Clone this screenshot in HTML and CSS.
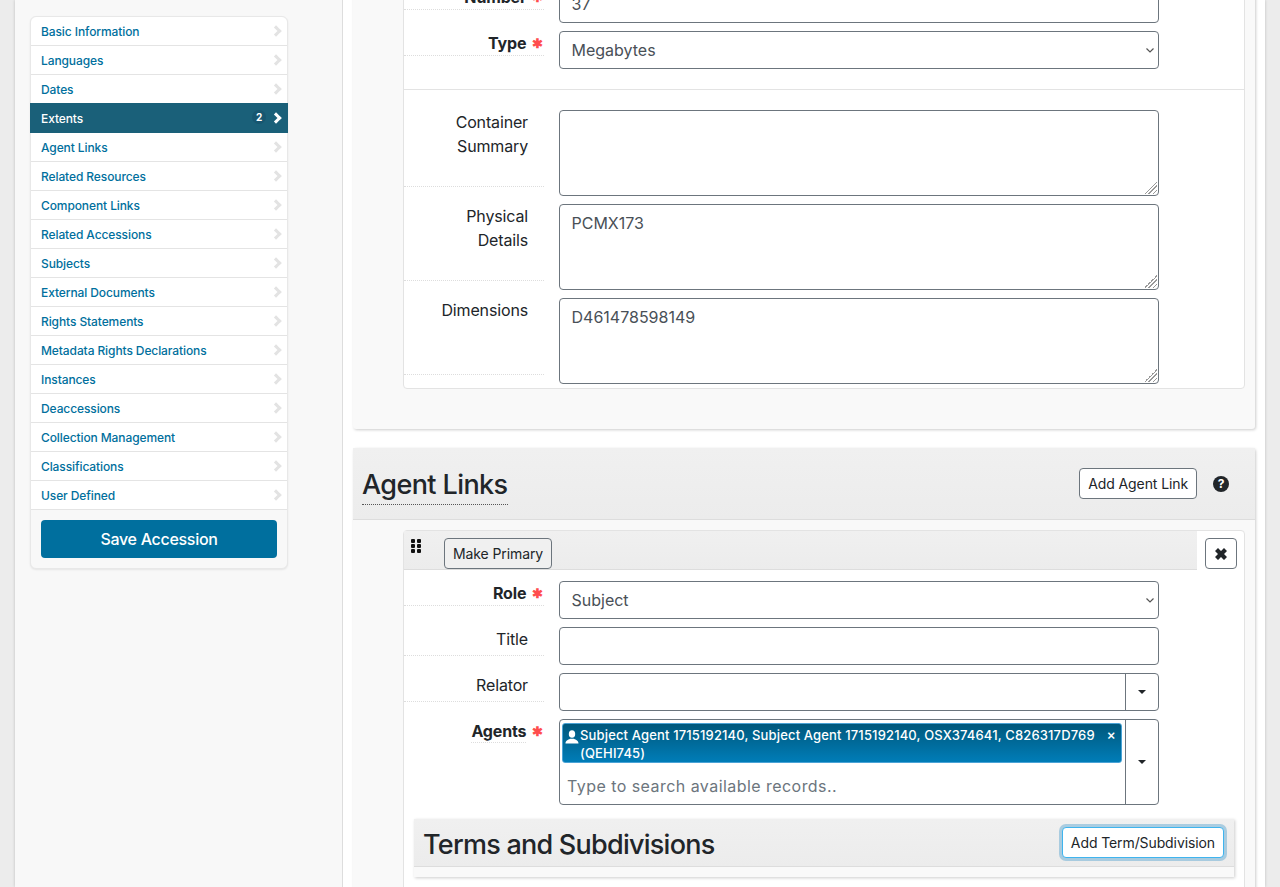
FILE: index.html
```html
<!DOCTYPE html>
<html lang="en">
<head>
    <meta charset="UTF-8">
    <title>Edit Accession</title>
    <link rel="stylesheet" href="styles.css">
</head>
<body>
<div class="page">
    <aside class="side">
        <div class="nav-card">
            <ul class="nav">
                <li><a href="#">Basic Information</a></li>
                <li><a href="#">Languages</a></li>
                <li><a href="#">Dates</a></li>
                <li class="active"><a href="#">Extents <span class="count">2</span></a></li>
                <li><a href="#">Agent Links</a></li>
                <li><a href="#">Related Resources</a></li>
                <li><a href="#">Component Links</a></li>
                <li><a href="#">Related Accessions</a></li>
                <li><a href="#">Subjects</a></li>
                <li><a href="#">External Documents</a></li>
                <li><a href="#">Rights Statements</a></li>
                <li><a href="#">Metadata Rights Declarations</a></li>
                <li><a href="#">Instances</a></li>
                <li><a href="#">Deaccessions</a></li>
                <li><a href="#">Collection Management</a></li>
                <li><a href="#">Classifications</a></li>
                <li><a href="#">User Defined</a></li>
            </ul>
            <div class="save-wrap">
                <button class="btn-save">Save Accession</button>
            </div>
        </div>
    </aside>

    <main class="main">
        <section class="section section-extents">
            <div class="subrecord">
                <div class="fields">
                    <div class="row">
                        <label class="label required">Number <span class="star">✱</span></label>
                        <input class="control" type="text" value="37">
                    </div>
                    <div class="row">
                        <label class="label required">Type <span class="star">✱</span></label>
                        <select class="control"><option>Megabytes</option></select>
                    </div>
                </div>
                <hr class="divider">
                <div class="fields fields-notes">
                    <div class="row">
                        <label class="label">Container Summary</label>
                        <textarea class="control area"></textarea>
                    </div>
                    <div class="row">
                        <label class="label">Physical Details</label>
                        <textarea class="control area">PCMX173</textarea>
                    </div>
                    <div class="row">
                        <label class="label">Dimensions</label>
                        <textarea class="control area">D461478598149</textarea>
                    </div>
                </div>
            </div>
        </section>

        <section class="section section-agents">
            <header class="section-head">
                <h2 class="section-title"><span>Agent Links</span></h2>
                <button class="btn">Add Agent Link</button>
                <span class="help">?</span>
            </header>
            <div class="section-body">
                <div class="subrecord">
                    <div class="sub-top">
                        <div class="sub-bar">
                            <span class="drag"><i></i><i></i><i></i><i></i><i></i><i></i></span>
                            <button class="btn btn-grey">Make Primary</button>
                        </div>
                        <button class="btn btn-close">
                            <svg width="14" height="14" viewBox="0 0 14 14"><path d="M1 4l3-3 3 3 3-3 3 3-3 3 3 3-3 3-3-3-3 3-3-3 3-3z" fill="#212529"/></svg>
                        </button>
                    </div>
                    <div class="fields fields-agent">
                        <div class="row">
                            <label class="label required">Role <span class="star">✱</span></label>
                            <select class="control"><option>Subject</option></select>
                        </div>
                        <div class="row">
                            <label class="label">Title</label>
                            <input class="control" type="text">
                        </div>
                        <div class="row">
                            <label class="label">Relator</label>
                            <div class="combo">
                                <input class="combo-input" type="text">
                                <span class="combo-btn"><b class="caret"></b></span>
                            </div>
                        </div>
                        <div class="row">
                            <label class="label required label-short"><span class="label-text">Agents</span> <span class="star">✱</span></label>
                            <div class="combo combo-tall">
                                <div class="combo-main">
                                    <div class="chip">
                                        <svg class="chip-icon" width="14" height="14" viewBox="0 0 14 14"><ellipse cx="7" cy="4" rx="3.200" ry="3.800" fill="#fff"/><path d="M0.500 13.500c0-2.800 2.400-3.600 4.600-4.800h3.800c2.200 1.200 4.600 2 4.600 4.800z" fill="#fff"/></svg>
                                        <span class="chip-text">Subject Agent 1715192140, Subject Agent 1715192140, OSX374641, C826317D769 (QEHI745)</span>
                                        <span class="chip-x">×</span>
                                    </div>
                                    <input class="chip-search" type="text" placeholder="Type to search available records..">
                                </div>
                                <span class="combo-btn"><b class="caret"></b></span>
                            </div>
                        </div>
                    </div>
                    <div class="terms">
                        <header class="terms-head">
                            <h3 class="terms-title">Terms and Subdivisions</h3>
                            <button class="btn btn-focus">Add Term/Subdivision</button>
                        </header>
                        <div class="terms-body"></div>
                    </div>
                </div>
            </div>
        </section>
    </main>
</div>
</body>
</html>
```
FILE: styles.css
```css
* {
    box-sizing: border-box;
}
html, body {
    margin: 0;
    height: 887px;
    overflow: hidden;
}
body {
    background-color: #ececec;
    font-family: Inter, "Liberation Sans", sans-serif;
    color: #212529;
}
.page {
    display: flex;
    height: 887px;
    margin: 0 15px;
    background-color: #fff;
    box-shadow: 0 0 3px rgba(0, 0, 0, 0.2);
    overflow: hidden;
}

/* sidebar */
.side {
    width: 328px;
    flex: none;
    padding: 16px 54px 0 15px;
    background-color: #f8f8f8;
    border-right: 1px solid #ddd;
}
.nav-card {
    background-color: #f8f8f8;
    border: 1px solid #e8e8e8;
    border-radius: 6px;
    box-shadow: 0 1px 2px rgba(0, 0, 0, 0.08);
}
.nav {
    list-style: none;
    margin: 0;
    padding: 0;
}
.nav li {
    height: 29px;
    background-color: #fff;
    border-bottom: 1px solid #e4e4e4;
}
.nav li:first-child {
    border-radius: 6px 6px 0 0;
}
.nav a {
    display: flex;
    align-items: center;
    height: 28px;
    padding: 0 7px 0 10px;
    font-size: 12px;
    font-weight: 500;
    letter-spacing: -0.1px;
    color: #006f9d;
    text-decoration: none;
}
.nav a::after {
    content: "";
    width: 5px;
    height: 5px;
    margin-left: auto;
    border-top: 3.5px solid #e3e3e3;
    border-right: 3.5px solid #e3e3e3;
    transform: rotate(45deg);
}
.nav .active {
    height: 30px;
    margin: -1px -1px 0;
    padding-top: 1px;
    background-color: #1a6079;
    border-bottom-color: #1a6079;
}
.nav .active a {
    padding-left: 11px;
    padding-right: 8px;
    color: #fff;
}
.nav .active a::after {
    margin-left: 6px;
    border-color: #fff;
}
.count {
    display: flex;
    align-items: center;
    justify-content: center;
    width: 14px;
    height: 14px;
    margin-left: auto;
    margin-bottom: 2px;
    border-radius: 50%;
    background-color: #175670;
    font-size: 10px;
    font-weight: 700;
}
.save-wrap {
    padding: 10px;
}
.btn-save {
    display: block;
    width: 100%;
    height: 38px;
    border: none;
    border-radius: 4px;
    background-color: #006f9e;
    color: #fff;
    font-family: inherit;
    font-size: 16px;
    font-weight: 500;
    letter-spacing: -0.3px;
}

/* main column */
.main {
    flex: 1;
    min-width: 0;
    padding: 0 10px;
    margin-top: -24px;
}
.section {
    background-color: #f9f9f9;
    box-shadow: 1px 1px 3px rgba(0, 0, 0, 0.2);
    border-radius: 3px;
}
.section-extents {
    padding: 0 10px 40px 50px;
    margin-bottom: 19px;
}
.section-agents {
    height: 600px;
}
.section-head {
    display: flex;
    align-items: center;
    height: 72px;
    padding: 0 26px 0 9px;
    background: linear-gradient(#f0f0f0, #ececec);
    border-bottom: 1px solid #ddd;
}
.section-title {
    margin: 4px auto 0 0;
    font-size: 27px;
    font-weight: 500;
    letter-spacing: -0.6px;
    line-height: 36px;
}
.section-title span {
    display: inline-block;
    padding-bottom: 1px;
    border-bottom: 1px dotted #555;
}
.section-body {
    padding: 10px 10px 0 50px;
}
.subrecord {
    background-color: #fff;
    border: 1px solid #e3e3e3;
    border-radius: 4px;
    padding-bottom: 4px;
}
.section-body .subrecord {
    height: 500px;
}
.fields {
    display: flex;
    flex-direction: column;
    gap: 8px;
    padding-top: 8px;
}
.row {
    display: flex;
}
.label {
    flex: none;
    display: block;
    width: 140px;
    margin: 0 15px 9px 0;
    padding: 0 16px 0 20px;
    border-bottom: 1px dotted #ddd;
    font-size: 16px;
    letter-spacing: -0.15px;
    line-height: 24px;
    text-align: right;
}
.required {
    margin-bottom: 13px;
    padding-right: 0;
    padding-left: 0;
    font-weight: 700;
}
.label-short {
    border-bottom: none;
}
.label-text {
    display: inline-block;
    line-height: 22px;
    border-bottom: 1px dotted #ddd;
}
.star {
    display: inline-block;
    width: 13px;
    margin-left: 1px;
    font-size: 13px;
    line-height: 24px;
    color: #ff4d4d;
    text-align: center;
    vertical-align: top;
}
.control {
    display: block;
    width: 600px;
    height: 38px;
    padding: 6px 11.5px;
    border: 1px solid #6c757d;
    border-radius: 4px;
    background-color: #fff;
    color: #495057;
    font-family: inherit;
    font-size: 16px;
    line-height: 24px;
}
select.control {
    appearance: none;
    background-image: url("data:image/svg+xml,%3Csvg xmlns='http://www.w3.org/2000/svg' width='8' height='5'%3E%3Cpath d='M0.500 0.500L4 4L7.500 0.500' fill='none' stroke='%23555' stroke-width='1.200'/%3E%3C/svg%3E");
    background-repeat: no-repeat;
    background-position: right 4px center;
}
.area {
    height: 86px;
    resize: none;
    background-image:
        linear-gradient(135deg, #fff 50%, transparent 50%),
        repeating-linear-gradient(135deg, #999 0, #999 1px, #fff 1px, #fff 3px);
    background-size: 13px 13px;
    background-position: right 1px bottom 1px;
    background-repeat: no-repeat;
}
.divider {
    margin: 20px 0;
    border: none;
    border-top: 1px solid #e3e3e3;
}
.fields-notes {
    padding-top: 0;
}

/* buttons */
.btn {
    height: 31px;
    padding: 0 8px;
    border: 1px solid #6c757d;
    border-radius: 4px;
    background-color: #fff;
    color: #212529;
    font-family: inherit;
    font-size: 14px;
    letter-spacing: -0.1px;
}
.help {
    display: flex;
    align-items: center;
    justify-content: center;
    width: 16px;
    height: 16px;
    margin-left: 16px;
    border-radius: 50%;
    background-color: #212529;
    color: #fff;
    font-size: 12px;
    font-weight: 700;
}
.sub-top {
    display: flex;
    height: 39px;
}
.sub-bar {
    display: flex;
    width: 793px;
    height: 39px;
    padding: 7px 0 0 7px;
    background: linear-gradient(#f0f0f0, #ececec);
    border-bottom: 1px solid #ddd;
}
.drag {
    display: grid;
    grid-template-columns: 4px 4px;
    grid-auto-rows: 4px;
    gap: 1px 2px;
    width: 33px;
    margin-top: 1px;
}
.drag i {
    background-color: #111;
    border-radius: 1px;
}
.btn-grey {
    background-color: #f0f0f0;
}
.btn-close {
    display: flex;
    align-items: center;
    justify-content: center;
    width: 32px;
    margin: 7px 0 0 8px;
    padding: 0;
}
.fields-agent {
    padding-top: 11px;
}

/* comboboxes */
.combo {
    display: flex;
    width: 600px;
    height: 38px;
    border: 1px solid #6c757d;
    border-radius: 4px;
    background-color: #fff;
}
.combo-tall {
    height: 86px;
}
.combo-input {
    flex: 1;
    min-width: 0;
    border: none;
    background: transparent;
}
.combo-main {
    flex: 1;
    min-width: 0;
    padding: 3px 3px 0 2px;
}
.combo-btn {
    display: flex;
    flex: none;
    align-items: center;
    justify-content: center;
    width: 33px;
    border-left: 1px solid #6c757d;
}
.caret {
    width: 0;
    height: 0;
    border-top: 4px solid #212529;
    border-left: 4px solid transparent;
    border-right: 4px solid transparent;
}
.chip {
    display: flex;
    height: 40px;
    padding: 2px 5px 0 2px;
    border: 1px solid #4aa3d6;
    border-radius: 3px;
    background: linear-gradient(#00587c, #007db8);
    color: #fff;
    font-size: 13px;
    font-weight: 500;
    letter-spacing: 0.15px;
    line-height: 18px;
}
.chip-icon {
    flex: none;
    margin: 4px 1px 0 0;
}
.chip-text {
    flex: 1;
    padding-right: 8px;
}
.chip-x {
    flex: none;
    font-size: 14px;
}
.chip-search {
    display: block;
    width: 100%;
    height: 38px;
    margin-top: 4px;
    padding: 0 5px;
    border: none;
    background: transparent;
    font-family: inherit;
    font-size: 16px;
}
.chip-search::placeholder {
    color: #6c757d;
    letter-spacing: 0.45px;
    opacity: 1;
}

/* nested terms block */
.terms {
    margin: 14px 10px 0;
    background-color: #f9f9f9;
    box-shadow: 1px 1px 3px rgba(0, 0, 0, 0.2);
}
.terms-head {
    display: flex;
    align-items: center;
    justify-content: space-between;
    height: 48px;
    padding: 0 10px 0 9px;
    background: linear-gradient(#f0f0f0, #ececec);
    border-bottom: 1px solid #ddd;
}
.terms-title {
    margin: 3px 0 0;
    font-size: 27px;
    font-weight: 500;
    letter-spacing: -0.75px;
}
.btn-focus {
    border-color: #3fb4ee;
    box-shadow: 0 0 0 3px rgba(100, 170, 210, 0.5);
}
.terms-body {
    height: 10px;
}
```
